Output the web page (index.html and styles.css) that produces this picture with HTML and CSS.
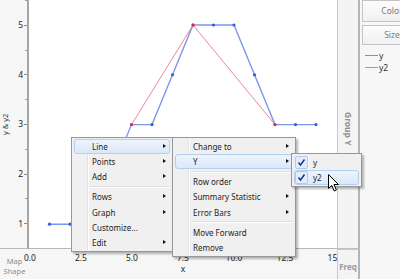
FILE: index.html
```html
<!DOCTYPE html>
<html lang="en">
<head>
  <meta charset="UTF-8">
  <title>Graph Builder</title>
  <link rel="stylesheet" href="styles.css">
</head>
<body>
  <div class="report">
    <div class="y-axis">
      <div class="y-title">y &amp; y2</div>
      <div class="y-ticks">
        <div class="tick">5</div>
        <div class="tick">4</div>
        <div class="tick">3</div>
        <div class="tick">2</div>
        <div class="tick">1</div>
      </div>
    </div>

    <div class="plot">
      <svg width="308" height="248" viewBox="0 0 308 248">
        <polyline class="line-y" points="20.5,224.2 41,224.2 61.5,224.2 82,174.4 102.5,124.6 123,124.6 143.5,74.8 164,25 184.5,25 205,25 225.5,74.8 246,124.6 266.5,124.6 287,124.6"/>
        <g class="pts-y">
          <circle cx="20.5" cy="224.2" r="1.6"/><circle cx="41" cy="224.2" r="1.6"/>
          <circle cx="61.5" cy="224.2" r="1.6"/><circle cx="82" cy="174.4" r="1.6"/>
          <circle cx="123" cy="124.6" r="1.6"/><circle cx="143.5" cy="74.8" r="1.6"/>
          <circle cx="184.5" cy="25" r="1.6"/><circle cx="205" cy="25" r="1.6"/>
          <circle cx="225.5" cy="74.8" r="1.6"/><circle cx="266.5" cy="124.6" r="1.6"/>
          <circle cx="287" cy="124.6" r="1.6"/>
        </g>
        <polyline class="line-y2" points="102.5,124.6 164,25 246,124.6"/>
        <g class="pts-y2">
          <circle cx="102.5" cy="124.6" r="1.7"/><circle cx="164" cy="25" r="1.7"/>
          <circle cx="246" cy="124.6" r="1.7"/>
        </g>
      </svg>
    </div>

    <div class="group-y"><span>Group Y</span></div>

    <div class="side">
      <div class="drop-btn">Color</div>
      <div class="drop-btn">Size</div>
      <div class="legend">
        <div class="legend-row"><i class="swatch blue"></i>y</div>
        <div class="legend-row"><i class="swatch red"></i>y2</div>
      </div>
    </div>

    <div class="map-shape">Map<br>Shape</div>

    <div class="x-axis">
      <div class="x-labels">
        <span>0.0</span><span>2.5</span><span>5.0</span><span>7.5</span>
        <span>10.0</span><span>12.5</span><span>15.0</span>
      </div>
      <div class="x-title">x</div>
    </div>

    <div class="freq">Freq</div>

    <!-- context menus -->
    <div class="menu menu-main">
      <div class="item sub on">Line</div>
      <div class="item sub">Points</div>
      <div class="item sub">Add</div>
      <div class="sep"></div>
      <div class="item sub">Rows</div>
      <div class="item sub">Graph</div>
      <div class="item">Customize...</div>
      <div class="item sub">Edit</div>
    </div>

    <div class="menu menu-line">
      <div class="item sub">Change to</div>
      <div class="item sub on">Y</div>
      <div class="sep"></div>
      <div class="item">Row order</div>
      <div class="item sub">Summary Statistic</div>
      <div class="item sub">Error Bars</div>
      <div class="sep"></div>
      <div class="item">Move Forward</div>
      <div class="item">Remove</div>
    </div>

    <div class="menu menu-y">
      <div class="item check-item"><span class="check"><svg width="11" height="11" viewBox="0 0 11 11"><path d="M2.5 5.5 L4.5 8 L8.5 2.5"/></svg></span>y</div>
      <div class="item check-item on"><span class="check"><svg width="11" height="11" viewBox="0 0 11 11"><path d="M2.5 5.5 L4.5 8 L8.5 2.5"/></svg></span>y2</div>
    </div>

    <svg class="cursor" width="12" height="20" viewBox="0 0 12 20">
      <path d="M0.5 0.5 L0.5 14.5 L3.8 11.4 L6.2 17 L8.4 16 L6 10.5 L10.5 10.5 Z"/>
    </svg>
  </div>
</body>
</html>
```

FILE: styles.css
```css
body {
  margin: 0;
  font-family: "Noto Sans", "Liberation Sans", sans-serif;
  background-color: #f6f6f6;
  color: #1e1e1e;
}

* {
  box-sizing: border-box;
}

.report {
  position: relative;
  display: grid;
  grid-template-columns: 29px 308px 23px 40px;
  grid-template-rows: 249px 30px;
  width: 400px;
  height: 279px;
  overflow: hidden;
}

/* y axis */
.y-axis {
  display: flex;
  background-color: #f6f6f6;
  border-right: 2px solid #a6a6a6;
  border-bottom: 1px solid #b8b8b8;
}

.y-title {
  width: 14px;
  writing-mode: vertical-rl;
  transform: rotate(180deg);
  text-align: center;
  font-size: 7.5px;
  color: #333;
}

.y-ticks {
  flex: 1;
  display: flex;
  flex-direction: column;
}

.tick {
  position: relative;
  height: 49.8px;
  display: flex;
  align-items: center;
  justify-content: flex-end;
  padding-right: 4px;
  font-size: 8.5px;
  color: #222;
}

.tick::after {
  content: "";
  position: absolute;
  right: 0;
  top: 50%;
  width: 3px;
  height: 1px;
  background-color: #8a8a8a;
}

.tick::before {
  content: "";
  position: absolute;
  right: 0;
  top: 0;
  width: 2px;
  height: 1px;
  background-color: #9a9a9a;
}

/* plot */
.plot {
  background-color: #fff;
  border-bottom: 1px solid #b8b8b8;
}

.plot svg {
  display: block;
}

.line-y {
  fill: none;
  stroke: #7d98ea;
  stroke-width: 1.4;
}

.pts-y circle {
  fill: #2f5fdc;
}

.line-y2 {
  fill: none;
  stroke: #eb8994;
  stroke-width: 1;
}

.pts-y2 circle {
  fill: #d22d4a;
}

/* drop zones */
.group-y {
  display: flex;
  align-items: center;
  justify-content: center;
  background-color: #f4f4f4;
  border-left: 1px solid #c9c9c9;
  border-right: 2px solid #b4b4b4;
  border-bottom: 1px solid #c0c0c0;
}

.group-y span {
  writing-mode: vertical-rl;
  font-size: 8.5px;
  font-weight: bold;
  color: #8e8e8e;
  margin-top: 10px;
}

.side {
  grid-row: 1 / 3;
  grid-column: 4;
  display: flex;
  flex-direction: column;
  gap: 3px;
  padding-left: 2px;
  background-color: #f7f7f7;
  overflow: hidden;
}

.drop-btn {
  flex: none;
  width: 60px;
  height: 22px;
  line-height: 20px;
  border: 1px solid #c4c4c4;
  background: linear-gradient(#fdfdfd, #f0f0f0);
  text-align: center;
  font-size: 8.5px;
  color: #7a7a7a;
}

.drop-btn:nth-child(2) {
  height: 20px;
  line-height: 18px;
}

.legend {
  padding: 1px 0 0 3px;
}

.legend-row {
  display: flex;
  align-items: center;
  height: 12px;
  font-size: 8.5px;
  color: #333;
}

.swatch {
  width: 13px;
  height: 1px;
  margin-right: 1px;
}

.swatch.blue {
  background-color: #6f8ee6;
}

.swatch.red {
  background-color: #e67c88;
}

.map-shape {
  display: flex;
  align-items: center;
  justify-content: center;
  text-align: center;
  font-size: 7.5px;
  line-height: 10px;
  color: #8c8c8c;
  padding-top: 3px;
}

.x-axis {
  display: flex;
  flex-direction: column;
  align-items: center;
}

.x-labels {
  display: flex;
  margin: 3px -25.5px 0;
  font-size: 8.5px;
  color: #222;
}

.x-labels span {
  width: 51px;
  text-align: center;
  line-height: 11px;
}

.x-title {
  font-size: 8.5px;
  line-height: 11px;
  color: #222;
}

.freq {
  display: flex;
  align-items: center;
  justify-content: center;
  border-left: 1px solid #c9c9c9;
  border-right: 2px solid #b4b4b4;
  border-top: 1px solid #c9c9c9;
  background-color: #f4f4f4;
  font-size: 8px;
  font-weight: bold;
  color: #9a9a9a;
  padding-top: 4px;
}

/* context menus */
.menu {
  position: absolute;
  padding: 1px 2px;
  background-color: #f0f0f0;
  border: 1px solid #979797;
  box-shadow: 2px 2px 2px rgba(0, 0, 0, 0.28);
  font-size: 8px;
}

.menu::before {
  content: "";
  position: absolute;
  left: 15px;
  top: 1px;
  bottom: 1px;
  width: 1px;
  background-color: #e2e3e3;
  box-shadow: 1px 0 0 #fff;
}

.menu-main {
  left: 71px;
  top: 137px;
  width: 102px;
}

.menu-line {
  left: 172px;
  top: 137px;
  width: 124px;
}

.menu-y {
  left: 291px;
  top: 153px;
  width: 71px;
}

.item {
  position: relative;
  height: 15.2px;
  line-height: 13.2px;
  padding-left: 17px;
  border: 1px solid transparent;
  border-radius: 3px;
  white-space: nowrap;
}

.item.sub::after {
  content: "";
  position: absolute;
  right: 3px;
  top: 4px;
  border-left: 3px solid #111;
  border-top: 2.5px solid transparent;
  border-bottom: 2.5px solid transparent;
}

.item.on {
  background: linear-gradient(#edf4fc, #dae8f7);
  border-color: #b3d0ef;
}

.sep {
  position: relative;
  height: 2px;
  margin: 1.4px 0 1.4px 16px;
  border-top: 1px solid #e0e0e0;
  border-bottom: 1px solid #fff;
}

.check-item {
  display: flex;
  align-items: center;
  padding-left: 0;
}

.check {
  display: flex;
  align-items: center;
  justify-content: center;
  width: 13px;
  height: 13px;
  margin-right: 5px;
  border: 1px solid #afcbea;
  border-radius: 2px;
  background-color: #e3edf9;
}

.check path {
  fill: none;
  stroke: #1d2f9e;
  stroke-width: 1.5;
}

.cursor {
  position: absolute;
  left: 328px;
  top: 174px;
}

.cursor path {
  fill: #fff;
  stroke: #000;
  stroke-width: 1;
}
```
